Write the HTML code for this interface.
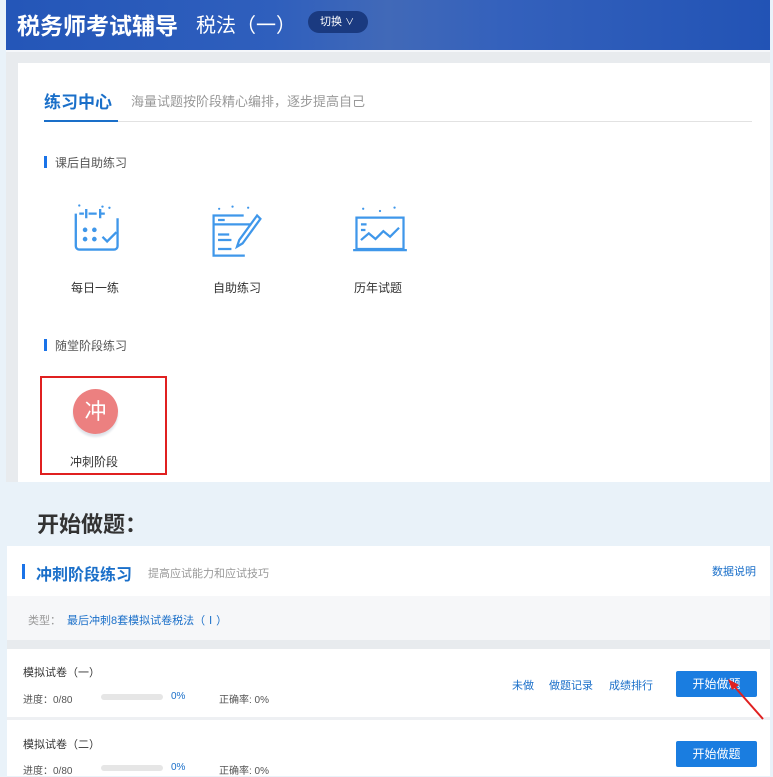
<!DOCTYPE html>
<html><head><meta charset="utf-8"><style>
*{margin:0;padding:0;box-sizing:border-box}
body{width:773px;height:776px;overflow:hidden;background:#e9f2f9;font-family:"Liberation Sans","Noto Sans CJK SC",sans-serif;position:relative;color:#333}
.abs{position:absolute}
.hdr{left:6px;top:0;width:764px;height:50px;background:linear-gradient(90deg,#2456b8 0%,#2f5fbd 35%,#4169b8 50%,#3461bc 65%,#2253b5 100%)}
.gray{left:6px;top:50px;width:764px;height:432px;background:#e8ebee;border-top:2px solid #f5f7fa}
.card{left:18px;top:63px;width:752px;height:419px;background:#fff}
.t{white-space:nowrap}
.bar{width:3px;height:12px;background:#1a73e8}
.btn{width:81px;height:26px;background:#1a7de0;color:#fff;font-size:12px;text-align:center;line-height:26px;border-radius:2px}
.prog{width:62px;height:6px;background:#e6e6e6;border-radius:3px}
</style></head><body>
<div class="abs hdr"></div>
<div class="abs t" style="left:17px;top:7px;font-size:23px;font-weight:bold;color:#fff">税务师考试辅导</div>
<div class="abs t" style="left:196px;top:9px;font-size:20px;color:#fff">税法（一）</div>
<div class="abs t" style="left:308px;top:11px;width:60px;height:22px;border-radius:11px;background:#1a3a80;color:#fff;font-size:11px;line-height:22px;padding-left:12px">切换 <span style="font-size:9px">∨</span></div>
<div class="abs gray"></div>
<div class="abs card"></div>
<div class="abs t" style="left:44px;top:88px;font-size:17px;font-weight:bold;color:#1a6fc9">练习中心</div>
<div class="abs t" style="left:131px;top:91px;font-size:13px;color:#999">海量试题按阶段精心编排，逐步提高自己</div>
<div class="abs" style="left:44px;top:121px;width:708px;height:1px;background:#e2e2e2"></div>
<div class="abs" style="left:44px;top:120px;width:74px;height:2px;background:#1a6fc9"></div>
<div class="abs bar" style="left:44px;top:156px"></div>
<div class="abs t" style="left:55px;top:154px;font-size:12px;color:#555">课后自助练习</div>
<svg class="abs" style="left:70px;top:202px" width="58" height="58" viewBox="0 0 50 50" fill="none" stroke="#3f97ea" stroke-width="2">
<path d="M5 10 v28 a3 3 0 0 0 3 3 h30 a3 3 0 0 0 3 -3 v-24 M8 10 h4 M16 10 h7 M26 10 h4"/><path d="M14 6 v8 M26 6 v8"/>
<circle cx="13" cy="24" r="2" fill="#3f97ea" stroke="none"/><circle cx="21" cy="24" r="2" fill="#3f97ea" stroke="none"/><circle cx="13" cy="32" r="2" fill="#3f97ea" stroke="none"/><circle cx="21" cy="32" r="2" fill="#3f97ea" stroke="none"/>
<path d="M28 30 l4 4 l8 -8"/><circle cx="8" cy="3" r="1" fill="#3f97ea" stroke="none"/><circle cx="28" cy="4" r="1" fill="#3f97ea" stroke="none"/><circle cx="34" cy="5" r="1" fill="#3f97ea" stroke="none"/></svg>
<svg class="abs" style="left:208px;top:202px" width="58" height="56" viewBox="0 0 52 50" fill="none" stroke="#3f97ea" stroke-width="2">
<path d="M32 12 h-27 v36 h28 M5 20 h34 M9 16 h6 M9 29 h10 M9 34 h12 M9 42 h12"/><path d="M44 12 l-16 22 l-2 6 l5 -3 l16 -22 z"/>
<circle cx="10" cy="6" r="1" fill="#3f97ea" stroke="none"/><circle cx="22" cy="4" r="1" fill="#3f97ea" stroke="none"/><circle cx="36" cy="5" r="1" fill="#3f97ea" stroke="none"/></svg>
<svg class="abs" style="left:352px;top:202px" width="56" height="56" viewBox="0 0 50 50" fill="none" stroke="#3f97ea" stroke-width="2">
<path d="M4 14 h42 v28 h-42 z M1 43 h48"/><path d="M8 20 h5 M8 25 h4 M8 34 l7 -6 l6 5 l7 -7 l6 5 l8 -8"/>
<circle cx="10" cy="6" r="1" fill="#3f97ea" stroke="none"/><circle cx="25" cy="8" r="1" fill="#3f97ea" stroke="none"/><circle cx="38" cy="5" r="1" fill="#3f97ea" stroke="none"/></svg>
<div class="abs t" style="left:71px;top:279px;font-size:12px;color:#333">每日一练</div>
<div class="abs t" style="left:213px;top:279px;font-size:12px;color:#333">自助练习</div>
<div class="abs t" style="left:354px;top:279px;font-size:12px;color:#333">历年试题</div>
<div class="abs bar" style="left:44px;top:339px"></div>
<div class="abs t" style="left:55px;top:337px;font-size:12px;color:#555">随堂阶段练习</div>
<div class="abs" style="left:40px;top:376px;width:127px;height:99px;border:2px solid #e02020"></div>
<div class="abs" style="left:73px;top:389px;width:45px;height:45px;border-radius:50%;background:#ec8080;box-shadow:0 3px 2px #e0e4ea;color:#fff;font-size:22px;text-align:center;line-height:45px">冲</div>
<div class="abs t" style="left:70px;top:453px;font-size:12px;color:#333">冲刺阶段</div>
<div class="abs t" style="left:37px;top:507px;font-size:22px;font-weight:bold;color:#333">开始做题：</div>
<div class="abs" style="left:7px;top:546px;width:763px;height:230px;background:#fff"></div>
<div class="abs" style="left:7px;top:596px;width:763px;height:44px;background:#f6f7f9"></div>
<div class="abs" style="left:7px;top:640px;width:763px;height:9px;background:#e8ebee"></div>
<div class="abs" style="left:7px;top:717px;width:763px;height:3px;background:#eef0f3"></div>
<div class="abs bar" style="left:22px;top:564px;height:15px"></div>
<div class="abs t" style="left:36px;top:561px;font-size:16px;font-weight:bold;color:#1a6fc9">冲刺阶段练习</div>
<div class="abs t" style="left:148px;top:565px;font-size:11px;color:#999">提高应试能力和应试技巧</div>
<div class="abs t" style="left:712px;top:563px;font-size:11px;color:#1a6fc9">数据说明</div>
<div class="abs t" style="left:28px;top:612px;font-size:11px;color:#999">类型：</div>
<div class="abs t" style="left:67px;top:612px;font-size:11px;color:#1a6fc9">最后冲刺8套模拟试卷税法（Ⅰ）</div>
<div class="abs t" style="left:23px;top:664px;font-size:11px;color:#333">模拟试卷（一）</div>
<div class="abs t" style="left:23px;top:691px;font-size:10px;color:#555">进度：0/80</div>
<div class="abs prog" style="left:101px;top:694px"></div>
<div class="abs t" style="left:171px;top:691px;font-size:10px;color:#1a6fc9">0%</div>
<div class="abs t" style="left:219px;top:691px;font-size:10px;color:#555">正确率: 0%</div>
<div class="abs t" style="left:512px;top:677px;font-size:11px;color:#1a6fc9">未做</div>
<div class="abs t" style="left:549px;top:677px;font-size:11px;color:#1a6fc9">做题记录</div>
<div class="abs t" style="left:609px;top:677px;font-size:11px;color:#1a6fc9">成绩排行</div>
<div class="abs btn" style="left:676px;top:671px">开始做题</div>
<svg class="abs" style="left:725px;top:675px" width="45" height="50"><path d="M38 44 L8 10" stroke="#e02020" stroke-width="2"/><path d="M3 4 L14 10 L7 15 Z" fill="#e02020"/></svg>
<div class="abs t" style="left:23px;top:736px;font-size:11px;color:#333">模拟试卷（二）</div>
<div class="abs t" style="left:23px;top:762px;font-size:10px;color:#555">进度：0/80</div>
<div class="abs prog" style="left:101px;top:765px"></div>
<div class="abs t" style="left:171px;top:762px;font-size:10px;color:#1a6fc9">0%</div>
<div class="abs t" style="left:219px;top:762px;font-size:10px;color:#555">正确率: 0%</div>
<div class="abs btn" style="left:676px;top:741px">开始做题</div>
</body></html>
